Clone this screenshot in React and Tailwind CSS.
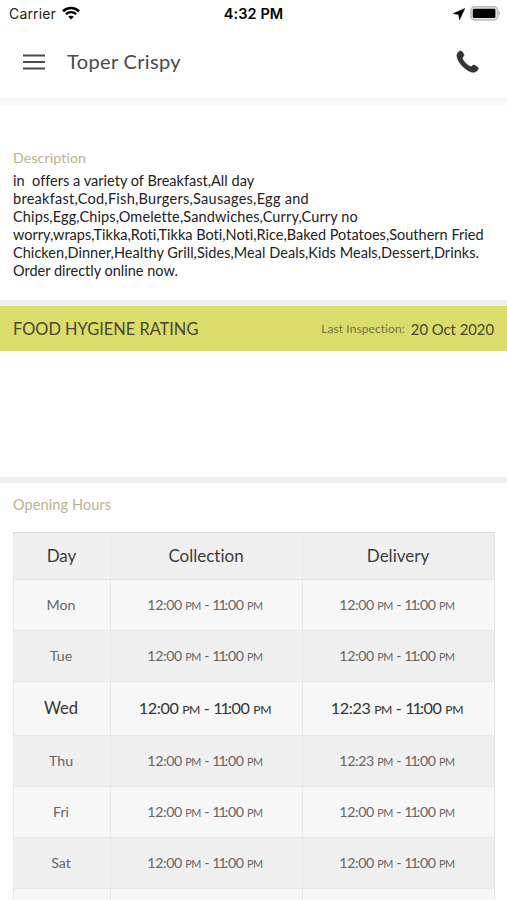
const description = [
  { text: 'in\u00a0 offers a variety of Breakfast,All day', spacing: 'tracking-[0.02px]' },
  { text: 'breakfast,Cod,Fish,Burgers,Sausages,Egg and', spacing: 'tracking-[0.27px]' },
  { text: 'Chips,Egg,Chips,Omelette,Sandwiches,Curry,Curry no', spacing: 'tracking-[0.13px]' },
  { text: 'worry,wraps,Tikka,Roti,Tikka Boti,Noti,Rice,Baked Potatoes,Southern Fried', spacing: 'tracking-[0.01px]' },
  { text: 'Chicken,Dinner,Healthy Grill,Sides,Meal Deals,Kids Meals,Dessert,Drinks.', spacing: 'tracking-[0.04px]' },
  { text: 'Order directly online now.', spacing: 'tracking-normal' },
];

const hours = [
  { day: 'Mon', collection: '12:00', delivery: '12:00' },
  { day: 'Tue', collection: '12:00', delivery: '12:00' },
  { day: 'Wed', collection: '12:00', delivery: '12:23', today: true },
  { day: 'Thu', collection: '12:00', delivery: '12:23' },
  { day: 'Fri', collection: '12:00', delivery: '12:00' },
  { day: 'Sat', collection: '12:00', delivery: '12:00' },
];

function StatusBar() {
  return (
    <div className="grid h-[27px] grid-cols-3 items-center pl-[9px] pr-[6px] font-['Inter',sans-serif] text-black">
      <div className="flex items-center gap-[6px]">
        <span className="text-[14px] tracking-[0.15px] text-[#222]">Carrier</span>
        <svg className="-mt-px h-[14px] w-[18px]" viewBox="0 0 18 14" fill="none" stroke="#000">
          <path d="M1 5.2C5.4 0.9 12.6 0.9 17 5.2" strokeWidth="2.6" />
          <path d="M3.9 8.2C6.7 5.5 11.3 5.5 14.1 8.2" strokeWidth="2.3" />
          <path d="M9 13.6L6.2 10.7C7.8 9.3 10.2 9.3 11.8 10.7Z" fill="#000" stroke="none" />
        </svg>
      </div>
      <div className="pr-[3px] text-center text-[14.5px] font-semibold tracking-[0.1px]">4:32 PM</div>
      <div className="flex items-center justify-end gap-[5px]">
        <svg className="h-3 w-3" viewBox="0 0 12 12">
          <path d="M11.8 0.4L0.2 5.6L5.6 6.5L6.6 11.8Z" fill="#000" stroke="#000" strokeWidth="0.5" />
        </svg>
        <svg className="h-[15px] w-[31px]" viewBox="0 0 31 15">
          <rect x="0.9" y="0.8" width="26.8" height="13.2" rx="3.8" fill="#e4e4e4" stroke="#bdbdbd" strokeWidth="1.5" />
          <rect x="2.8" y="2.7" width="22.6" height="9.4" rx="1.4" fill="#000" />
          <path d="M28.8 5.2C30.6 5.7 30.6 9 28.8 9.6Z" fill="#aaa" />
        </svg>
      </div>
    </div>
  );
}

function Header() {
  return (
    <header className="flex h-[71px] items-center pb-[2px] pl-[23px] pr-[28px]">
      <svg className="h-4 w-[22px]" viewBox="0 0 22 16" stroke="#4a4a4a" strokeWidth="1.8">
        <path d="M0 1.5H22M0 8H22M0 14.5H22" />
      </svg>
      <h1 className="ml-[22px] flex-1 pb-[2px] text-[20px] leading-6 tracking-[0.35px] text-[#4a4a4a]">Toper Crispy</h1>
      <svg className="h-[23px] w-[23px]" viewBox="0 0 23 23">
        <path
          d="M4.8 0.8C5.7 0.7 8.1 4.2 8 5.3C7.8 6.6 6.3 7.2 6.4 8.2C6.9 10.9 12.2 16.1 14.9 16.6C15.9 16.7 16.5 15.1 17.6 15.1C18.8 15.1 22.4 17.2 22.4 18.2C22.3 20.2 19.4 22.4 17.4 22.3C10.6 22 0.8 12 0.9 5.5C1 3.4 2.9 0.9 4.8 0.8Z"
          fill="#333"
          stroke="#333"
          strokeWidth="0.5"
        />
      </svg>
    </header>
  );
}

function Meridiem({ today }) {
  return <span className={today ? 'text-[12.2px] tracking-[-0.4px]' : 'text-[10.8px] tracking-[-0.4px]'}>PM</span>;
}

function TimeRange({ from, today }) {
  return (
    <div className="flex items-center justify-center border-l border-[#e8e8e8] pr-[3px]">
      <span
        className={
          today
            ? 'whitespace-nowrap text-[16.2px] tracking-[-0.4px]'
            : 'whitespace-nowrap text-[14.2px] tracking-[-0.37px]'
        }
      >
        {from} <Meridiem today={today} /> - <span className="tracking-[-2px]">11</span>:00 <Meridiem today={today} />
      </span>
    </div>
  );
}

function OpeningHours() {
  return (
    <section className="pr-[12px] pl-[13px]">
      <h2 className="mb-[17px] pt-[12px] text-[14.5px] leading-5 tracking-[0.1px] text-[#bbb292]">Opening Hours</h2>
      <div className="border-x border-t border-x-[#e8e8e8] border-t-[#d9d9d9]">
        <div className="grid h-[46px] grid-cols-[96px_192px_1fr] bg-[#f0f0f0] text-center text-[17px] leading-[46px] text-[#3c3c3c]">
          <div className="pr-px">Day</div>
          <div className="border-l border-[#e8e8e8] pr-px">Collection</div>
          <div className="border-l border-[#e8e8e8] pr-px">Delivery</div>
        </div>
        {hours.map((row) => (
          <div
            key={row.day}
            className={
              row.today
                ? 'grid h-[54px] grid-cols-[96px_192px_1fr] border-t border-[#e8e8e8] bg-[#f7f7f7] text-[#333]'
                : 'grid h-[51px] grid-cols-[96px_192px_1fr] border-t border-[#e8e8e8] text-[#666] odd:bg-[#f0f0f0] even:bg-[#f7f7f7]'
            }
          >
            <div
              className={
                row.today
                  ? 'flex items-center justify-center pr-[2px] text-[16.5px]'
                  : 'flex items-center justify-center pr-[2px] text-[14.2px]'
              }
            >
              {row.day}
            </div>
            <TimeRange from={row.collection} today={row.today} />
            <TimeRange from={row.delivery} today={row.today} />
          </div>
        ))}
        <div className="grid h-[51px] grid-cols-[96px_192px_1fr] border-t border-[#e8e8e8] bg-[#f7f7f7]">
          <div />
          <div className="border-l border-[#e8e8e8]" />
          <div className="border-l border-[#e8e8e8]" />
        </div>
      </div>
    </section>
  );
}

export default function App() {
  return (
    <div className="h-[900px] w-[507px] overflow-hidden bg-white font-['Lato',sans-serif] [font-variant-ligatures:none]">
      <StatusBar />
      <Header />
      <div className="h-2 bg-linear-to-b from-[#f5f5f5] to-[#fcfcfc]" />

      {/* Description */}
      <section className="h-[194px] px-[13px] pt-[42px]">
        <h2 className="text-[14.2px] leading-5 tracking-[0.1px] text-[#bbb292]">Description</h2>
        <div className="mt-1 text-[14.5px] leading-[17.9px] text-[#222]">
          {description.map((line) => (
            <p key={line.text} className={`whitespace-nowrap ${line.spacing}`}>
              {line.text}
            </p>
          ))}
        </div>
      </section>

      {/* Hygiene rating */}
      <section className="h-[177px] border-t-[6px] border-[#efefef]">
        <div className="flex h-[45px] items-center bg-[#dadd6b] px-[13px] text-[#49452c]">
          <h2 className="flex-1 pt-px text-[16.4px]">FOOD HYGIENE RATING</h2>
          <span className="mr-[6px] text-[12px] tracking-[0.08px] text-[#77743f]">Last Inspection:</span>
          <span className="pt-px text-[14.8px]">20 Oct 2020</span>
        </div>
      </section>
      <div className="h-[6px] bg-[#efefef]" />

      <OpeningHours />
    </div>
  );
}
